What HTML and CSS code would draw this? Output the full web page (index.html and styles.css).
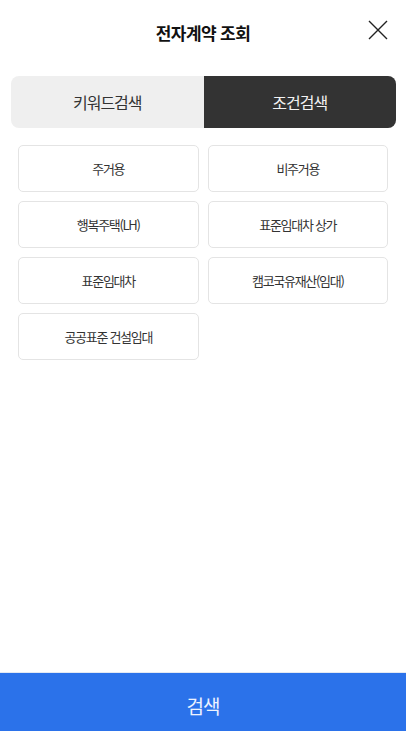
FILE: index.html
```html
<!DOCTYPE html>
<html lang="ko">
<head>
    <meta charset="UTF-8">
    <meta name="viewport" content="width=device-width, initial-scale=1.0">
    <title>전자계약 조회</title>
    <link rel="stylesheet" href="styles.css">
</head>
<body>

    <div class="page">
        <div class="header-bar">
            <div class="title">전자계약 조회</div>
            <button class="close-btn" aria-label="닫기">
                <svg width="20" height="20" viewBox="0 0 20 20">
                    <path d="M1 1 L19 19 M19 1 L1 19" stroke="#222" stroke-width="1.4" fill="none"/>
                </svg>
            </button>
        </div>

        <!-- 검색 방식 탭 -->
        <div class="tabs">
            <div class="tab">키워드검색</div>
            <div class="tab active">조건검색</div>
        </div>

        <!-- 계약 유형 -->
        <div class="options">
            <div class="option">주거용</div>
            <div class="option">비주거용</div>
            <div class="option">행복주택(LH)</div>
            <div class="option">표준임대차 상가</div>
            <div class="option">표준임대차</div>
            <div class="option">캠코국유재산(임대)</div>
            <div class="option">공공표준 건설임대</div>
        </div>

        <div class="search-btn">검색</div>
    </div>

</body>
</html>
```

FILE: styles.css
```css
body {
    margin: 0;
    font-family: "Noto Sans CJK KR", "Noto Sans", sans-serif;
    background: #fff;
    color: #222;
}

.page {
    width: 406px;
    height: 731px;
    display: flex;
    flex-direction: column;
    overflow: hidden;
}

.header-bar {
    position: relative;
    height: 64px;
    display: flex;
    justify-content: center;
    align-items: center;
}

.header-bar .title {
    font-size: 17px;
    font-weight: bold;
    letter-spacing: -0.6px;
    color: #111;
    margin-top: 1px;
}

.close-btn {
    position: absolute;
    right: 18px;
    top: 20px;
    width: 20px;
    height: 20px;
    padding: 0;
    border: 0;
    background: none;
}
.close-btn svg { display: block; }

.tabs {
    display: flex;
    height: 52px;
    margin: 12px 10px 0 11px;
    border-radius: 8px;
    overflow: hidden;
    background-color: #efefef;
}

.tab {
    flex: 1;
    display: flex;
    justify-content: center;
    align-items: center;
    font-size: 16px;
    letter-spacing: -1px;
    color: #333;
}

.tab.active {
    background-color: #333;
    color: #f2f2f2;
}

.options {
    display: grid;
    grid-template-columns: 1fr 1fr;
    column-gap: 9px;
    row-gap: 9px;
    padding: 0 18px;
    margin-top: 17px;
}

.option {
    height: 45px;
    border: 1px solid #e4e4e4;
    border-radius: 5px;
    display: flex;
    justify-content: center;
    align-items: center;
    font-size: 13px;
    letter-spacing: -1.3px;
    color: #333;
}

.search-btn {
    margin-top: auto;
    height: 58px;
    background-color: #2b72ea;
    box-shadow: 0 -1px 0 #e3e9f3;
    color: #eef3ff;
    font-size: 19px;
    letter-spacing: -1px;
    display: flex;
    justify-content: center;
    align-items: center;
    padding-top: 7px;
    box-sizing: border-box;
}
```
